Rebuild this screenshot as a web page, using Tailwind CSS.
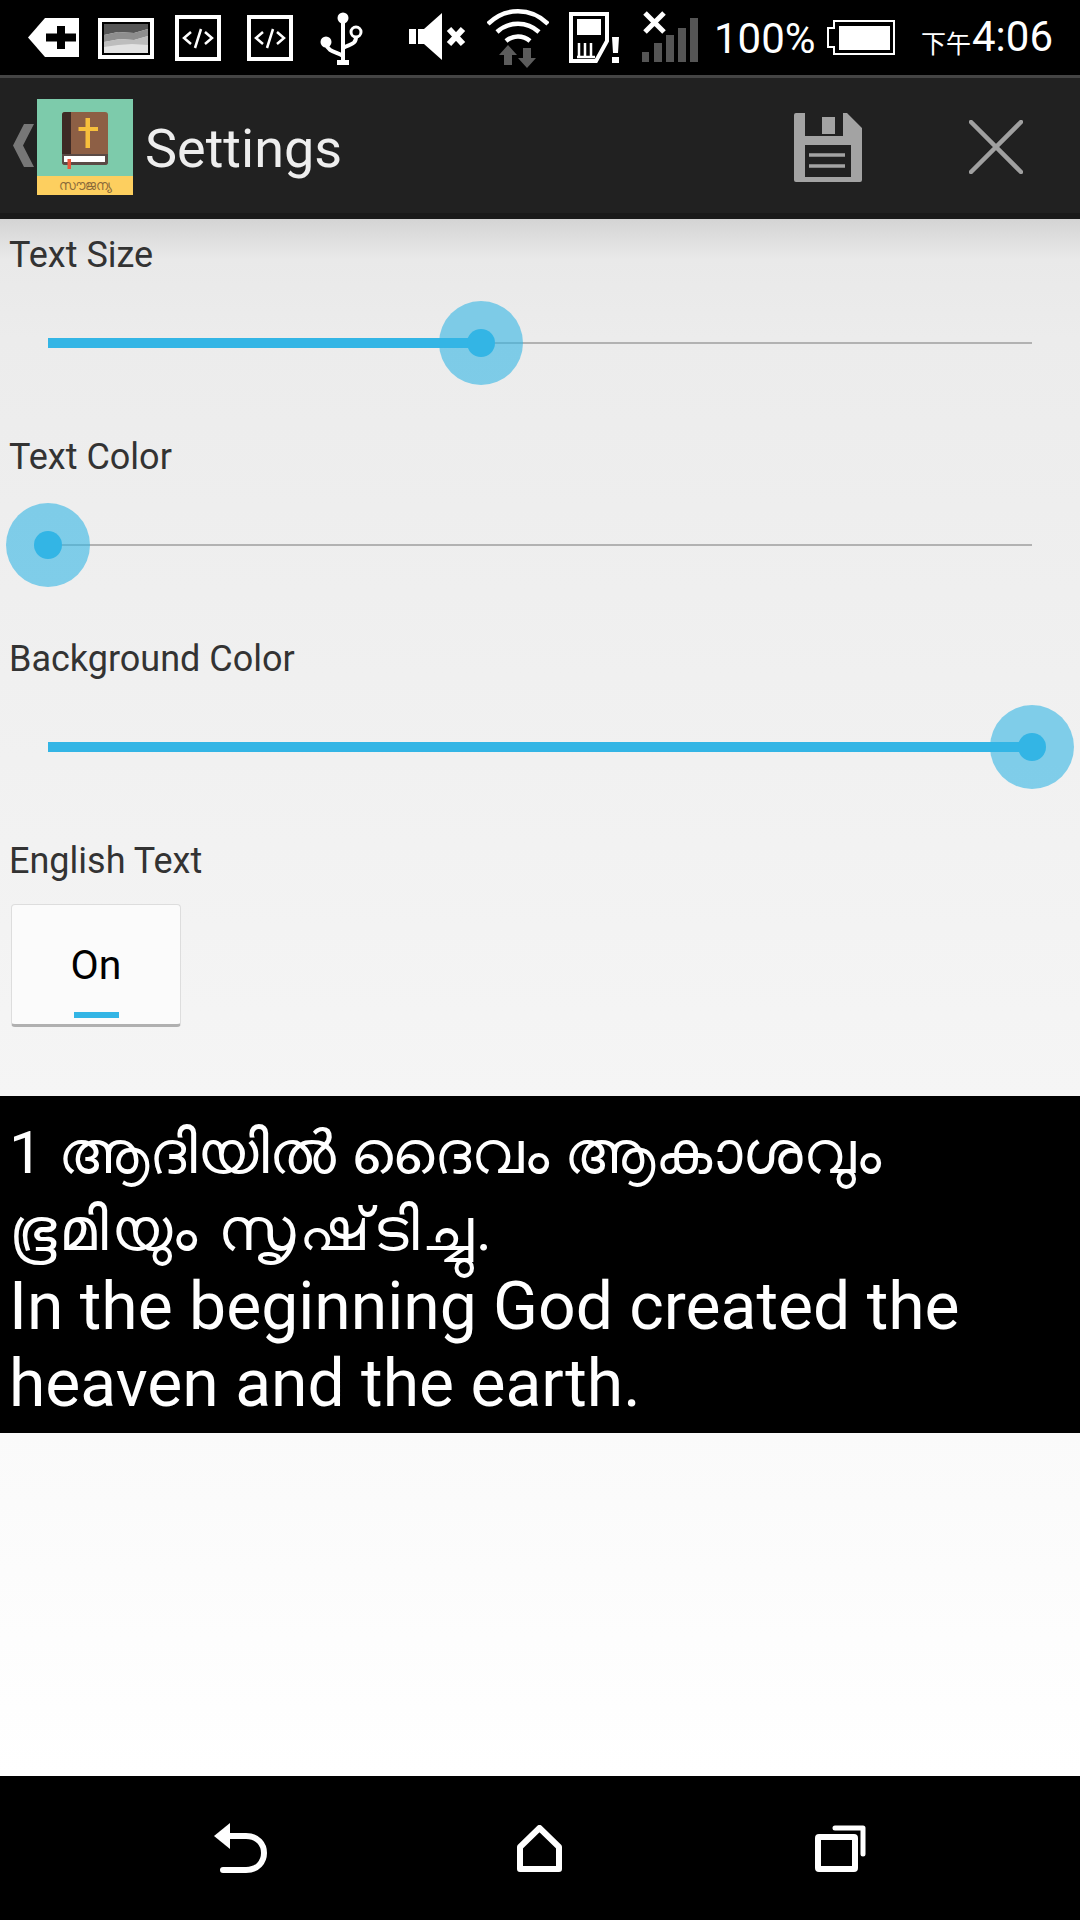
<!DOCTYPE html>
<html lang="en">
<head>
    <meta charset="UTF-8">
    <meta name="viewport" content="width=device-width, initial-scale=1.0">
    <title>Settings</title>
    <script src="https://cdn.jsdelivr.net/npm/@tailwindcss/browser@4"></script>
</head>
<body class="bg-white">
<div class="w-[1080px] h-[1920px] flex flex-col overflow-hidden font-['Roboto','Noto_Sans','DejaVu_Sans',sans-serif]">

    <!-- Status bar -->
    <div class="h-[75px] bg-black flex items-start text-white shrink-0">
        <svg class="ml-[28px] mt-[18px] shrink-0" width="51" height="39" viewBox="0 0 51 39"><path fill="#fff" d="M0 19.500 17 0h34v39H17z"/><path fill="#000" d="M30 8h8v7.500h11v8H38V31h-8v-7.500H19v-8h11z" transform="translate(-1 0)"/></svg>
        <svg class="ml-[19px] mt-[18px] shrink-0" width="56" height="41" viewBox="0 0 56 41"><rect width="56" height="41" fill="#fff"/><rect x="4" y="4" width="48" height="33" fill="#000"/><rect x="6" y="6" width="44" height="29" fill="#e2e2e2"/><path fill="#555" d="M6 6h44v5l-14 4-16-1-14 3z"/><path fill="#8e8e8e" d="M6 17l14-3 16 1 14-4v7l-14 4-14-1-16 3z"/><path fill="#bdbdbd" d="M6 24l16-3 14 1 14-4v9l-16-1-14 1-14 2z"/></svg>
        <svg class="ml-[21px] mt-[15px] shrink-0" width="46" height="46" viewBox="0 0 46 46"><rect x="2" y="2" width="42" height="42" fill="none" stroke="#fff" stroke-width="4"/><path fill="none" stroke="#fff" stroke-width="2.500" d="M16 17l-7 6 7 6M30 17l7 6-7 6M26 14l-6 19"/></svg>
        <svg class="ml-[26px] mt-[15px] shrink-0" width="46" height="46" viewBox="0 0 46 46"><rect x="2" y="2" width="42" height="42" fill="none" stroke="#fff" stroke-width="4"/><path fill="none" stroke="#fff" stroke-width="2.500" d="M16 17l-7 6 7 6M30 17l7 6-7 6M26 14l-6 19"/></svg>
        <svg class="ml-[27px] mt-[12px] shrink-0" width="43" height="54" viewBox="0 0 43 54"><circle cx="23" cy="6" r="5.500" fill="#fff"/><circle cx="6" cy="30" r="5.500" fill="#fff"/><circle cx="36" cy="20" r="5" fill="none" stroke="#fff" stroke-width="3"/><path fill="none" stroke="#fff" stroke-width="4" d="M23 8v40M6 32c2 8 11 8 17 12M36 25c0 8-7 7-13 11"/><rect x="17" y="48" width="12" height="5" fill="#fff"/></svg>
        <svg class="ml-[46px] mt-[13px] shrink-0" width="58" height="47" viewBox="0 0 58 47"><path fill="#fff" d="M0 16h7v15H0zM9 16h6L33 0v47L15 31H9z"/><path stroke="#fff" stroke-width="6" d="M40 16l14 15M54 16 40 31"/></svg>
        <svg class="ml-[20px] mt-[8px] shrink-0" width="62" height="62" viewBox="0 0 62 62"><path fill="none" stroke="#fff" stroke-width="4.500" d="M1 16C18-1 44-1 61 16M10 24c12-11 30-11 42 0M19 33c7-6 17-6 24 0"/><path fill="#5c5c5c" d="M21 37l9 10h-5v10h-8V47h-5zM36 40h8v10h5l-9 10-9-10h5z"/></svg>
        <svg class="ml-[20px] mt-[12px] shrink-0" width="51" height="52" viewBox="0 0 51 52"><path fill="none" stroke="#fff" stroke-width="4" d="M2 2h36v27L27 49H2z"/><rect x="8" y="7" width="24" height="16" fill="#fff"/><path stroke="#fff" stroke-width="2.500" d="M10 31v14M16 31v14M22 31v14M8 45h18"/><path fill="#fff" d="M43 25h7l-1 16h-5zM43 45h7v6h-7z"/></svg>
        <svg class="ml-[22px] mt-[11px] shrink-0" width="56" height="52" viewBox="0 0 56 52"><path stroke="#fff" stroke-width="5" d="M3 2l19 19M22 2 3 21"/><path fill="#555" d="M0 41h7v10H0zM12 32h8v19h-8zM24 24h8v27h-8zM36 17h8v34h-8zM48 7h8v44h-8z"/></svg>
        <div class="ml-[16px] mt-[14px] text-[42px] leading-[50px] w-[102px] shrink-0">100%</div>
        <svg class="ml-[11px] mt-[20px] shrink-0" width="68" height="35" viewBox="0 0 68 35"><path fill="none" stroke="#fff" stroke-width="2" d="M7 8V1h60v33H7v-7H1V8z"/><rect x="12" y="6" width="51" height="24" fill="#fff"/></svg>
        <div class="ml-[26px] mt-[26px] text-[25px] leading-[32px] w-[51px] shrink-0 whitespace-nowrap font-['Noto_Sans_CJK_TC',sans-serif]">下午</div>
        <div class="mt-[12px] text-[42px] leading-[50px] shrink-0">4:06</div>
    </div>

    <!-- Action bar -->
    <div class="h-[144px] shrink-0 bg-[#212121] border-t-[3px] border-[#444444] border-b-[6px] border-b-[#1a1a1a] flex items-center relative">
        <svg class="ml-[13px] shrink-0" width="21" height="43" viewBox="0 0 21 43"><path fill="#777" d="M11 0h10L10 21.500 21 43H11L0 21.500z"/></svg>
        <div class="ml-[3px] mt-[2px] w-[96px] h-[96px] bg-[#7dcbab] relative shrink-0 flex flex-col justify-end">
            <svg class="absolute left-[25px] top-[13px]" width="46" height="57" viewBox="0 0 46 57"><rect width="46" height="53" rx="3" fill="#8d5f45"/><path fill="#3e2a25" d="M3 0h6v44H0V3a3 3 0 0 1 3-3z"/><path fill="#f7bf3c" d="M23.500 6H28v9h8v4h-8v17h-4.500V19H16.500v-4h7z"/><path fill="#5a4a45" d="M0 42h46v8a3 3 0 0 1-3 3H3a3 3 0 0 1-3-3z"/><path fill="#fff" d="M2 44h41v6H2z"/><rect x="5.500" y="47" width="3.500" height="10" fill="#e8563a"/></svg>
            <div class="h-[19px] bg-[#fdcf5f] text-[#8a6a3a] text-[13px] leading-[19px] text-center">സൗജന്യ</div>
        </div>
        <div class="ml-[12px] mt-[6px] text-[#eeeeee] text-[54px] leading-[64px]">Settings</div>
        <svg class="absolute left-[794px] top-[35px]" width="68" height="69" viewBox="0 0 68 69"><path fill="#a3a3a3" d="M2 0h9v23h38V0h4l15 15v52a2 2 0 0 1-2 2H2a2 2 0 0 1-2-2V2a2 2 0 0 1 2-2z"/><rect x="28" y="4" width="13" height="17" fill="#a3a3a3"/><rect x="11" y="32" width="46" height="32" fill="#212121"/><path stroke="#a3a3a3" stroke-width="3.500" d="M15 42h36M15 53h36"/></svg>
        <svg class="absolute left-[969px] top-[42px]" width="54" height="54" viewBox="0 0 54 54"><path stroke="#a0a0a0" stroke-width="4.500" stroke-linecap="round" d="M2 2l50 50M52 2 2 52"/></svg>
    </div>

    <!-- Settings form -->
    <div class="h-[877px] shrink-0 bg-[linear-gradient(to_bottom,#d4d4d4_0,#e9e9e9_40px,#ececec_120px,#f5f5f5_100%)]">
        <div class="h-[202px] px-[9px] pt-[15px]">
            <div class="text-[#333333] text-[36px] leading-[42px]">Text Size</div>
            <div class="relative ml-[39px] w-[984px] h-[104px] mt-[15px]">
                <div class="absolute left-0 right-0 top-[51px] h-[2px] bg-[#b2b2b2]"></div>
                <div class="absolute left-0 top-[47px] h-[10px] bg-[#33b5e5] w-[433px]"></div>
                <div class="absolute left-[391px] top-[10px] w-[84px] h-[84px] rounded-full bg-[#33b5e5]/60 flex items-center justify-center"><div class="w-[28px] h-[28px] rounded-full bg-[#33b5e5]"></div></div>
            </div>
        </div>
        <div class="h-[202px] px-[9px] pt-[15px]">
            <div class="text-[#333333] text-[36px] leading-[42px]">Text Color</div>
            <div class="relative ml-[39px] w-[984px] h-[104px] mt-[15px]">
                <div class="absolute left-0 right-0 top-[51px] h-[2px] bg-[#b2b2b2]"></div>
                <div class="absolute left-[-42px] top-[10px] w-[84px] h-[84px] rounded-full bg-[#33b5e5]/60 flex items-center justify-center"><div class="w-[28px] h-[28px] rounded-full bg-[#33b5e5]"></div></div>
            </div>
        </div>
        <div class="h-[202px] px-[9px] pt-[15px]">
            <div class="text-[#333333] text-[36px] leading-[42px]">Background Color</div>
            <div class="relative ml-[39px] w-[984px] h-[104px] mt-[15px]">
                <div class="absolute left-0 right-0 top-[47px] h-[10px] bg-[#33b5e5]"></div>
                <div class="absolute left-[942px] top-[10px] w-[84px] h-[84px] rounded-full bg-[#33b5e5]/60 flex items-center justify-center"><div class="w-[28px] h-[28px] rounded-full bg-[#33b5e5]"></div></div>
            </div>
        </div>
        <div class="px-[9px] pt-[15px]">
            <div class="text-[#333333] text-[36px] leading-[42px]">English Text</div>
            <button class="relative ml-[2px] mt-[22px] block w-[170px] h-[123px] bg-[#fbfbfb] border border-[#dddddd] border-b-[3px] border-b-[#b0b0b0] rounded-[4px] text-black text-[41px] leading-[47px] pt-[1px]">
                On
                <span class="absolute left-[62px] bottom-[6px] w-[45px] h-[6px] bg-[#33b5e5]"></span>
            </button>
        </div>
    </div>

    <!-- Preview text -->
    <div class="h-[337px] shrink-0 bg-black text-white text-[66px] leading-[77px] px-[9px] pt-[18px]">
        <p class="text-[60px]">1 ആദിയിൽ ദൈവം ആകാശവും<br><span class="tracking-[3px]">ഭൂമിയും സൃഷ്‌ടിച്ചു.</span></p>
        <p>In the beginning God created the heaven and the earth.</p>
    </div>

    <div class="flex-1 bg-[linear-gradient(to_bottom,#fafafa,#ffffff)]"></div>

    <!-- Nav bar -->
    <div class="h-[144px] shrink-0 bg-black relative">
        <svg class="absolute left-[214px] top-[47px]" width="54" height="50" viewBox="0 0 54 50"><path fill="#fff" d="M0 13 16 0v26z"/><path fill="none" stroke="#fff" stroke-width="6" stroke-linecap="round" d="M14 13h18c24 0 24 34 0 34H9"/></svg>
        <svg class="absolute left-[517px] top-[49px]" width="45" height="47" viewBox="0 0 45 47"><path fill="none" stroke="#fff" stroke-width="6" stroke-linejoin="round" d="M22.500 3 42 22v22H3V22z"/></svg>
        <svg class="absolute left-[815px] top-[49px]" width="51" height="47" viewBox="0 0 51 47"><rect x="3" y="12" width="37" height="32" rx="1" fill="none" stroke="#fff" stroke-width="6" stroke-linejoin="round"/><path fill="none" stroke="#fff" stroke-width="5" stroke-linecap="round" stroke-linejoin="round" d="M20 3h28v26"/></svg>
    </div>
</div>
</body>
</html>
